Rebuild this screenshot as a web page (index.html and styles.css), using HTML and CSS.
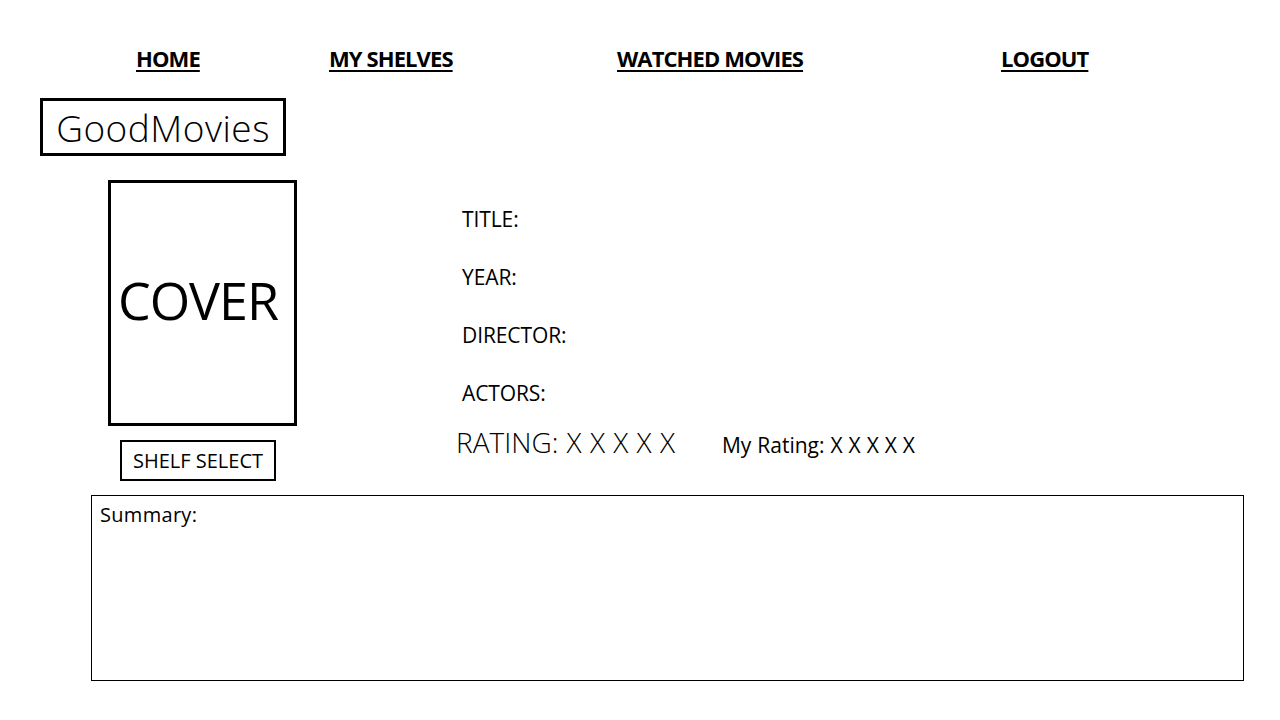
FILE: index.html
```html
<!DOCTYPE html>
<html lang="en">
<head>
    <meta charset="UTF-8">
    <meta name="viewport" content="width=device-width, initial-scale=1.0">
    <title>GoodMovies</title>
    <link rel="stylesheet" href="styles.css">
</head>
<body>
    <nav class="top-nav">
        <a href="#">HOME</a>
        <a href="#">MY SHELVES</a>
        <a href="#">WATCHED MOVIES</a>
        <a href="#">LOGOUT</a>
    </nav>

    <div class="brand">GoodMovies</div>

    <main class="movie">
        <div class="cover-col">
            <div class="cover">COVER</div>
            <button class="shelf-select">SHELF SELECT</button>
        </div>

        <div class="details">
            <p>TITLE:</p>
            <p>YEAR:</p>
            <p>DIRECTOR:</p>
            <p>ACTORS:</p>
            <div class="ratings">
                <span class="rating">RATING: X X X X X</span>
                <span class="my-rating">My Rating: X X X X X</span>
            </div>
        </div>
    </main>

    <section class="summary">
        Summary:
    </section>
</body>
</html>
```

FILE: styles.css
```css
* {
    box-sizing: border-box;
    font-family: 'Open Sans', 'Liberation Sans', sans-serif;
}

body {
    margin: 0;
    background: white;
    color: black;
    width: 1280px;
    height: 720px;
    overflow: hidden;
}

/* top links */
.top-nav {
    display: grid;
    grid-template-columns: 193px 288px 384px auto;
    padding: 45px 0 0 136px;
}

.top-nav a {
    color: black;
    font-weight: 700;
    font-size: 22px;
    line-height: 27px;
    letter-spacing: -0.9px;
    text-decoration: underline;
    text-underline-offset: 3px;
    text-decoration-thickness: 2px;
    justify-self: start;
}

.brand {
    margin: 26px 0 0 40px;
    width: 246px;
    height: 58px;
    border: 3px solid black;
    display: flex;
    align-items: center;
    justify-content: center;
    font-size: 37px;
    font-weight: 300;
    letter-spacing: 0.5px;
}

.movie {
    display: flex;
    margin: 24px 0 0 108px;
}

.cover-col {
    display: flex;
    flex-direction: column;
}

.cover {
    width: 189px;
    height: 246px;
    border: 3px solid black;
    display: flex;
    align-items: center;
    justify-content: center;
    padding: 0 9px 8px 0;
    font-size: 52px;
    letter-spacing: -1px;
}

.shelf-select {
    margin: 14px 0 0 12px;
    width: 156px;
    height: 41px;
    border: 2px solid black;
    background: white;
    padding: 0;
    font-size: 20px;
    letter-spacing: 0;
    color: black;
}

.details {
    margin-left: 165px;
    padding-top: 25px;
}

.details p {
    margin: 0 0 30px;
    font-size: 21px;
    line-height: 28px;
    letter-spacing: -0.1px;
}

.details p:nth-of-type(4) {
    margin-bottom: 17px;
}

.ratings {
    display: flex;
    align-items: baseline;
    gap: 47px;
    margin-left: -6px;
}

.rating {
    font-size: 28px;
    font-weight: 300;
    line-height: 36px;
    letter-spacing: 0;
    word-spacing: 1px;
}

.my-rating {
    font-size: 21px;
    letter-spacing: 0;
    word-spacing: 0.5px;
}

.summary {
    margin: 14px 0 0 91px;
    width: 1153px;
    height: 186px;
    border: 1px solid black;
    padding: 6px 8px;
    font-size: 20px;
    line-height: 26px;
    letter-spacing: 0.3px;
}
```
